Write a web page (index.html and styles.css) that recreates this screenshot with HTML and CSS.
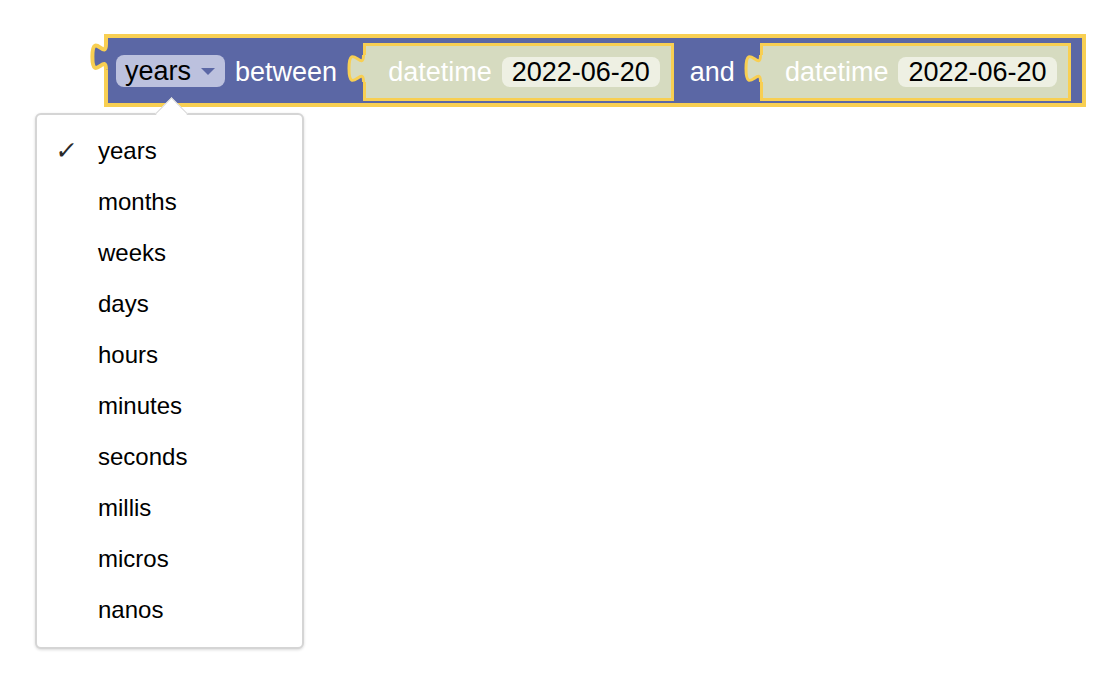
FILE: index.html
```html
<!DOCTYPE html>
<html>
<head>
<meta charset="utf-8">
<link rel="stylesheet" href="styles.css">
</head>
<body>
<div class="canvas">
  <div class="block">
    <svg class="tab tab-outer" width="24" height="30" viewBox="0 0 24 30">
      <path d="M18,2 c0,17 -13.6,-13.6 -13.6,12.75 s13.6,-4.25 13.6,12.75 L21,27.5 L21,2 Z" fill="#5b67a5"/>
      <path d="M18,2 c0,17 -13.6,-13.6 -13.6,12.75 s13.6,-4.25 13.6,12.75" fill="none" stroke="#f8cf52" stroke-width="4"/>
    </svg>
    <div class="dropfield"><span>years</span><svg class="caret" width="14" height="7" viewBox="0 0 14 7"><path d="M0,0 L14,0 L7,7 Z" fill="#5b67a5"/></svg></div>
    <span class="label between">between</span>
    <div class="inner">
      <svg class="tab tab-inner" width="22" height="34" viewBox="0 0 22 34">
        <path d="M17.5,2 c0,18 -14.5,-14.5 -14.5,13.5 s14.5,-4.5 14.5,13.5 L21,29 L21,2 Z" fill="#d6dbc0"/>
        <path d="M17.5,2 c0,18 -14.5,-14.5 -14.5,13.5 s14.5,-4.5 14.5,13.5" fill="none" stroke="#f8cf52" stroke-width="3"/>
      </svg>
      <span class="label">datetime</span>
      <span class="datefield">2022-06-20</span>
    </div>
    <span class="label and">and</span>
    <div class="inner">
      <svg class="tab tab-inner" width="22" height="34" viewBox="0 0 22 34">
        <path d="M17.5,2 c0,18 -14.5,-14.5 -14.5,13.5 s14.5,-4.5 14.5,13.5 L21,29 L21,2 Z" fill="#d6dbc0"/>
        <path d="M17.5,2 c0,18 -14.5,-14.5 -14.5,13.5 s14.5,-4.5 14.5,13.5" fill="none" stroke="#f8cf52" stroke-width="3"/>
      </svg>
      <span class="label">datetime</span>
      <span class="datefield">2022-06-20</span>
    </div>
  </div>

  <div class="dropdown">
    <ul class="menu">
      <li class="item checked"><span class="check">✓</span>years</li>
      <li class="item"><span class="check"></span>months</li>
      <li class="item"><span class="check"></span>weeks</li>
      <li class="item"><span class="check"></span>days</li>
      <li class="item"><span class="check"></span>hours</li>
      <li class="item"><span class="check"></span>minutes</li>
      <li class="item"><span class="check"></span>seconds</li>
      <li class="item"><span class="check"></span>millis</li>
      <li class="item"><span class="check"></span>micros</li>
      <li class="item"><span class="check"></span>nanos</li>
    </ul>
    <div class="arrow"></div>
  </div>
</div>
</body>
</html>
```
FILE: styles.css
```css
html, body {
  margin: 0;
  padding: 0;
  background: #ffffff;
}

body {
  font-family: "Liberation Sans", Arial, Helvetica, sans-serif;
  width: 1098px;
  height: 690px;
  overflow: hidden;
}

.canvas {
  position: relative;
  padding: 34px 0 0 104px;
}

.block {
  position: relative;
  display: inline-flex;
  align-items: center;
  box-sizing: border-box;
  height: 73px;
  padding: 5px 11px 2px 8px;
  background: #5b67a5;
  border: 4px solid #f8cf52;
}

.tab {
  position: absolute;
  display: block;
}

.tab-outer {
  left: -20px;
  top: 4px;
}

.tab-inner {
  left: -20px;
  top: 7px;
}

.label {
  font-size: 27px;
  color: #ffffff;
  line-height: 30px;
  white-space: nowrap;
}

.between {
  margin-left: 10px;
}

.and {
  margin-left: 16px;
}

.dropfield {
  display: flex;
  align-items: center;
  gap: 10px;
  height: 32px;
  padding: 0 10px 0 9px;
  border-radius: 8px;
  background: #bcc1de;
  font-size: 27px;
  color: #000000;
  margin-top: -2px;
}

.caret {
  display: block;
  margin-top: 1px;
}

.inner {
  position: relative;
  display: flex;
  align-items: center;
  gap: 10px;
  box-sizing: border-box;
  height: 58px;
  margin-left: 26px;
  padding: 0 11px 0 22px;
  background: #d6dbc0;
  border: 3px solid #f8cf52;
}

.inner + .and + .inner {
  margin-left: 25px;
}

.datefield {
  display: block;
  height: 30px;
  line-height: 30px;
  padding: 0 10px;
  border-radius: 8px;
  background: #eef0e3;
  font-size: 27px;
  color: #000000;
  white-space: nowrap;
}

.dropdown {
  position: absolute;
  left: 35px;
  top: 113px;
  z-index: 2;
}

.menu {
  list-style: none;
  margin: 0;
  box-sizing: border-box;
  width: 269px;
  padding: 10px 0 12px 0;
  background: #ffffff;
  border: 2px solid #d5d5d5;
  border-radius: 6px;
  box-shadow: 0 1px 3px rgba(0, 0, 0, 0.15);
}

.item {
  display: flex;
  align-items: center;
  height: 51px;
  font-size: 24px;
  color: #000000;
}

.check {
  display: inline-block;
  width: 42px;
  margin-left: 19px;
  font-family: "DejaVu Sans", sans-serif;
  font-size: 25px;
  font-weight: bold;
  color: #2a2a2a;
  transform: skewX(-8deg);
}

.arrow {
  position: absolute;
  left: 125px;
  top: -11px;
  width: 22px;
  height: 22px;
  background: #ffffff;
  border-top: 1px solid #d8d8d8;
  border-left: 1px solid #d8d8d8;
  transform: rotate(45deg);
}
```
